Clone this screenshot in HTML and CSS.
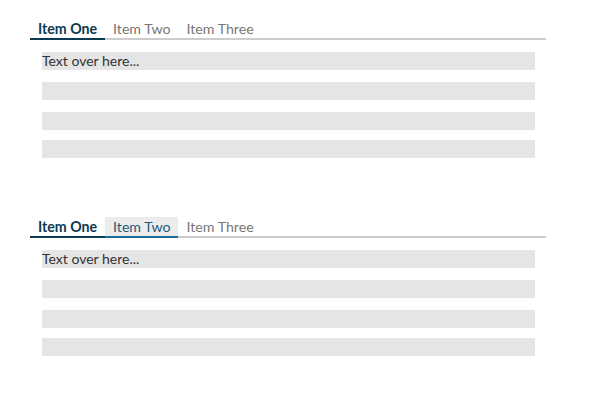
FILE: index.html
```html
<!DOCTYPE html>
<html>
<head>
<meta charset="utf-8">
<link rel="stylesheet" href="styles.css">
</head>
<body>
  <section class="demo">
    <div class="tablist">
      <div class="tab active">Item One</div>
      <div class="tab">Item Two</div>
      <div class="tab">Item Three</div>
    </div>
    <div class="panel">
      <div class="bar">Text over here...</div>
      <div class="bar"></div>
      <div class="bar"></div>
      <div class="bar"></div>
    </div>
  </section>
  <section class="demo second">
    <div class="tablist">
      <div class="tab active">Item One</div>
      <div class="tab hover">Item Two</div>
      <div class="tab">Item Three</div>
    </div>
    <div class="panel">
      <div class="bar">Text over here...</div>
      <div class="bar"></div>
      <div class="bar"></div>
      <div class="bar"></div>
    </div>
  </section>
</body>
</html>
```
FILE: styles.css
```css
html, body {
  margin: 0;
  padding: 0;
  background: #fff;
  font-family: "Lato", "Noto Sans", sans-serif;
}
.demo {
  margin: 19px 0 0 30px;
  width: 516px;
}
.demo.second {
  margin-top: 59px;
}
.tablist {
  display: flex;
  border-bottom: 2px solid #cccccc;
}
.tab {
  padding: 0 8px;
  height: 19px;
  line-height: 20px;
  font-size: 14.2px;
  color: #777777;
  border-bottom: 2px solid transparent;
  margin-bottom: -2px;
}
.tab.active {
  color: #0c3a52;
  font-weight: 700;
  border-bottom-color: #0c3a52;
}
.tab.hover {
  background: #ececec;
  color: #1d5b7a;
  border-bottom-color: #1b70a0;
}
.panel {
  padding: 12px 11px 0 12px;
}
.bar {
  height: 18px;
  line-height: 18px;
  background: #e5e5e5;
  font-size: 14px;
  color: #333333;
}
.bar + .bar {
  margin-top: 12px;
}
.bar:last-child {
  margin-top: 10px;
}
```
